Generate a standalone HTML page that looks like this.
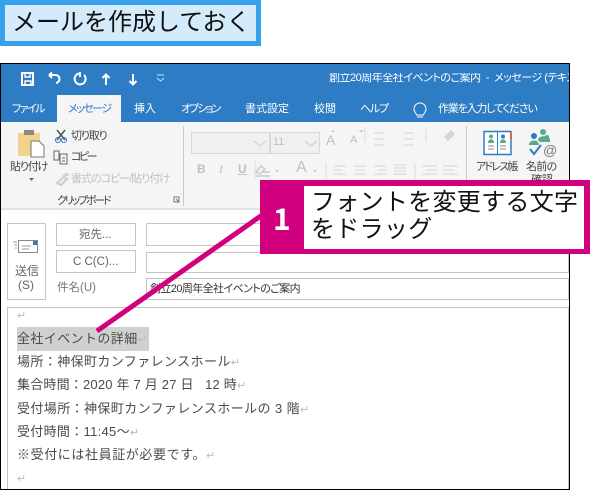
<!DOCTYPE html>
<html><head><meta charset="utf-8"><style>
html,body{margin:0;padding:0;background:#fff}
body{width:600px;height:490px;position:relative;overflow:hidden;font-family:"Liberation Sans","Noto Sans CJK JP",sans-serif}
.a{position:absolute;white-space:nowrap;line-height:1}
.b{position:absolute;box-sizing:border-box;border:1px solid #c6c6c6;background:#fff}
.p{font-feature-settings:"palt"}
.w{color:#fff;font-size:11px;font-feature-settings:"palt"}
.r{color:#444;font-size:11px;font-feature-settings:"palt"}
.d{color:#c0c0c0}
.l{font-size:13px;color:#4a4a4a;letter-spacing:.4px;left:17px}
.m{color:#bbb;font-size:11px;letter-spacing:0}
svg{position:absolute;left:0;top:0}
</style></head><body>
<div class="a" style="left:0;top:0;width:261px;height:46px;box-sizing:border-box;border:5px solid #38a0ea;background:#d3ebfb"></div>
<div class="a" style="left:12px;top:11px;font-size:24px;color:#111;letter-spacing:0">メールを作成しておく</div>

<div class="a" style="left:0;top:63px;width:570px;height:427px;box-sizing:border-box;border:1px solid #000;background:#fff"></div>
<div class="a" style="left:1px;top:64px;width:568px;height:58px;background:#2e7cc4"></div>
<div class="a" style="left:1px;top:122px;width:568px;height:86px;background:#f5f5f5;border-bottom:2px solid #e2e2e2"></div>
<div class="a" style="left:57px;top:95px;width:64px;height:27px;background:#f5f5f5"></div>

<div class="b" style="left:7px;top:223px;width:39px;height:77px"></div>
<div class="b" style="left:56px;top:223px;width:80px;height:23px"></div>
<div class="b" style="left:56px;top:250px;width:80px;height:23px"></div>
<div class="b" style="left:146px;top:223px;width:423px;height:23px"></div>
<div class="b" style="left:146px;top:252px;width:423px;height:21px"></div>
<div class="b" style="left:146px;top:278px;width:423px;height:22px"></div>
<div class="b" style="left:7px;top:307px;width:562px;height:182px;border-bottom:0"></div>

<svg width="600" height="490" fill="none">
<g stroke="#fff" stroke-width="2">
<rect x="22" y="73" width="11" height="12"/><path d="M25 73v4h5v-4M25 85v-4h6v4" stroke-width="1.400"/>
<path d="M49 75h6a4 4 0 0 1 1 8M49 75l3-2.500M49 75l3 3"/>
<path d="M79 73.500a5.500 5.500 0 1 0 5 1.500M80 72v5"/>
<path d="M106 85v-10M102.500 78l3.500-3.500 3.500 3.500"/>
<path d="M133 74v10M129.500 81l3.500 3.500 3.500-3.500"/>
</g>
<path d="M157 75h7M157 78l3.500 3 3.500-3" stroke="#cfe0f2" stroke-width="1"/>
<path d="M420 103a6 6 0 0 1 6 6c0 3-2 3.500-2.500 6h-7c-.5-2.500-2.500-3-2.500-6a6 6 0 0 1 6-6zM417 117h6" stroke="#fff" stroke-width="1"/>
<rect x="18" y="133" width="22" height="23" rx="1" fill="#f2d38e"/>
<rect x="24" y="130" width="10" height="5" fill="#8a8a8a"/>
<path d="M31 141h8l5 5v11H31z" fill="#fff" stroke="#777"/>
<path d="M29 178h5l-2.500 3z" fill="#666"/>
<path d="M57 130l8 10M65 130l-8 10" stroke="#555" stroke-width="1.500"/>
<circle cx="58" cy="140" r="2.500" stroke="#2e7cc4"/><circle cx="64" cy="140" r="2.500" stroke="#2e7cc4"/>
<path d="M54 151h5v9h-5zM60 154h7v10h-7zM62 158h3M62 161h3" stroke="#666" stroke-width="1"/>
<path d="M57 183l7-6 3 2-6 6zM63 176l4-2 1 2" stroke="#ccc" stroke-width="2"/>
<path d="M174 197h5v5h-5zM176 199l3 3" stroke="#777" stroke-width="1"/>
<path d="M183.500 126v80M466.500 126v76" stroke="#c8c8c8" stroke-width="1"/>
<rect x="191.500" y="132.500" width="78" height="21" fill="#eff1f0" stroke="#d8d8d8"/>
<rect x="270.500" y="132.500" width="49" height="21" fill="#eff1f0" stroke="#d8d8d8"/>
<path d="M254 141l6 5 6-5M305 141l6 5 6-5" stroke="#ccc"/>
<path d="M256 172l5-6 4 3-5 5zM263 172h7M256 176h14" stroke="#c9c9c9" stroke-width="1.500"/>
<path d="M275 170h4l-2 2.500zM313 170h4l-2 2.500" fill="#ccc"/>
<path d="M331 132l2-2 2 2M359 130h5l-2.500 2.500z" fill="#ccc"/>
<path d="M365 127v15M255 161v18M326 163v16M415 163v16M426 127v15" stroke="#dcdcdc"/>
<path d="M374 133h10M374 139h10M374 145h10M404 133h10M404 139h10M404 145h10M334 166h12M334 170h8M334 174h12M354 166h12M356 170h8M354 174h12M374 166h12M378 170h8M374 174h12M394 165h12M394 168h12M394 171h12M394 174h12M422 166h15M426 170h11M422 174h15M443 166h15M443 170h11M443 174h15" stroke="#d2d2d2"/>
<path d="M444 137l7-7 4 4-7 7z" fill="#d4d4d4"/>
<rect x="484" y="131.500" width="27" height="23" fill="#fff" stroke="#2e7cc4" stroke-width="1.500"/>
<path d="M497.500 132v22" stroke="#2e7cc4"/>
<circle cx="491" cy="136.500" r="2" fill="#58a98d"/><circle cx="503" cy="136.500" r="2" fill="#2e7cc4"/>
<path d="M488 143c0-5 6-5 6 0zM500 143c0-5 6-5 6 0z" fill="#58a98d"/>
<path d="M488 146h6M488 149h6M500 146h6M500 149h6" stroke="#888"/>
<path d="M511 133v6" stroke="#e0692e" stroke-width="2"/>
<circle cx="534" cy="136" r="3" fill="#2e7cc4"/><circle cx="543" cy="132" r="3" fill="#58a98d"/><circle cx="547" cy="137" r="2" fill="#58a98d"/>
<path d="M529 145c0-6 10-6 10 0zM538 140c0-5 12-5 12 0v2h-10z" fill="#58a98d"/>
<path d="M530 149l4 5 7-9" stroke="#2e7cc4" stroke-width="2"/>
<rect x="18.500" y="240.500" width="19" height="12" fill="#fff" stroke="#888"/>
<path d="M13 242h4M14 245h3M15 248h2M22 246h9M22 249h7" stroke="#999"/>
<rect x="33" y="241" width="4" height="4" fill="#2e7cc4"/>
</svg>

<div class="a w" style="left:12px;top:104px;letter-spacing:-1.500px">ファイル</div>
<div class="a p" style="left:68px;top:104px;font-size:11px;letter-spacing:-1.500px;color:#2e7cc4">メッセージ</div>
<div class="a w" style="left:134px;top:104px">挿入</div>
<div class="a w" style="left:181px;top:104px;letter-spacing:-2px">オプション</div>
<div class="a w" style="left:245px;top:104px">書式設定</div>
<div class="a w" style="left:314px;top:104px">校閲</div>
<div class="a w" style="left:360px;top:104px;letter-spacing:-1.200px">ヘルプ</div>
<div class="a w" style="left:438px;top:104px;letter-spacing:-1.200px">作業を入力してください</div>
<div class="a w" style="left:329px;top:73px;width:240px;overflow:hidden;letter-spacing:-.5px">創立20周年全社イベントのご案内 &nbsp;- &nbsp;メッセージ (テキスト形式)</div>

<div class="a r" style="left:10px;top:162px;letter-spacing:-1.200px">貼り付け</div>
<div class="a r" style="left:71px;top:131px;letter-spacing:-1.200px">切り取り</div>
<div class="a r" style="left:71px;top:152px;letter-spacing:-2.500px">コピー</div>
<div class="a r d" style="left:71px;top:174px;letter-spacing:-1px">書式のコピー/貼り付け</div>
<div class="a r" style="left:57px;top:196px;letter-spacing:-2.200px">クリップボード</div>
<div class="a d" style="left:273px;top:137px;font-size:11px">11</div>
<div class="a d" style="left:326px;top:133px;font-size:14px">A</div>
<div class="a d" style="left:350px;top:135px;font-size:11px">A</div>
<div class="a d" style="left:197px;top:163px;font-size:12px;font-weight:bold">B</div>
<div class="a d" style="left:219px;top:163px;font-size:12px;font-style:italic;font-family:'Liberation Serif',serif">I</div>
<div class="a d" style="left:238px;top:163px;font-size:12px;font-weight:bold;text-decoration:underline">U</div>
<div class="a d" style="left:296px;top:160px;font-size:16px">A</div>
<div class="a r" style="left:476px;top:162px;letter-spacing:-1.800px">アドレス帳</div>
<div class="a r" style="left:526px;top:162px;letter-spacing:-.7px">名前の</div>
<div class="a r" style="left:531px;top:175px">確認</div>
<div class="a" style="left:543px;top:143px;font-size:14px;color:#777">@</div>

<div class="a" style="left:15px;top:265px;font-size:12px;color:#666">送信</div>
<div class="a" style="left:18px;top:279px;font-size:12px;color:#666">(S)</div>
<div class="a" style="left:79px;top:230px;font-size:11.500px;color:#666">宛先...</div>
<div class="a" style="left:73px;top:257px;font-size:11.500px;color:#666">C C(C)...</div>
<div class="a" style="left:57px;top:283px;font-size:11.500px;color:#777">件名(U)</div>
<div class="a p" style="left:150px;top:284px;font-size:11px;color:#333;letter-spacing:-.6px">創立20周年全社イベントのご案内</div>

<div class="a m" style="left:17px;top:311px">↵</div>
<div class="a" style="left:17px;top:327px;width:132px;height:24px;background:#d0d0d0"></div>
<div class="a l" style="top:332px">全社イベントの詳細<span class="m">↵</span></div>
<div class="a l" style="top:355px">場所：神保町カンファレンスホール<span class="m">↵</span></div>
<div class="a l" style="top:378px;letter-spacing:.2px">集合時間：2020 年 7 月 27 日 &nbsp; 12 時<span class="m">↵</span></div>
<div class="a l" style="top:402px">受付場所：神保町カンファレンスホールの 3 階<span class="m">↵</span></div>
<div class="a l" style="top:425px;letter-spacing:.3px">受付時間：11:45～<span class="m">↵</span></div>
<div class="a l" style="top:448px;letter-spacing:.6px">※受付には社員証が必要です。<span class="m">↵</span></div>
<div class="a m" style="left:17px;top:474px">↵</div>

<svg width="600" height="490" fill="none"><path d="M97 331L265 213" stroke="#d1007e" stroke-width="5"/></svg>
<div class="a" style="left:260px;top:180px;width:330px;height:74px;background:#d1007e"></div>
<div class="a" style="left:304px;top:186px;width:280px;height:63px;background:#fff"></div>
<div class="a" style="left:273px;top:202px;font-size:30px;font-weight:bold;color:#fff;font-family:'Noto Sans CJK JP',sans-serif">1</div>
<div class="a" style="left:311px;top:191px;font-size:24px;color:#111;letter-spacing:.3px">フォントを変更する文字</div>
<div class="a" style="left:311px;top:218px;font-size:24px;color:#111;letter-spacing:.3px">をドラッグ</div>
</body></html>
